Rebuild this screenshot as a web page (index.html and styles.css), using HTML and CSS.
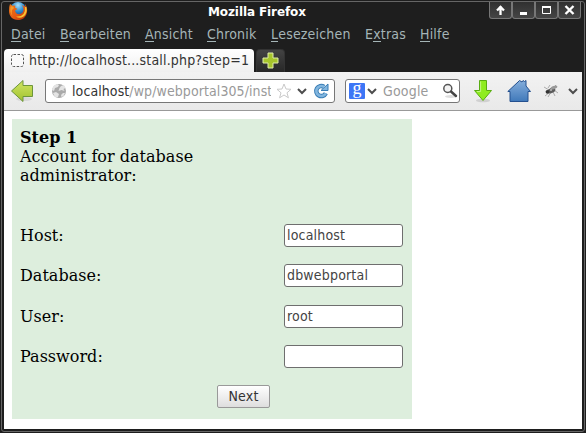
FILE: index.html
```html
<!DOCTYPE html>
<html lang="de">
<head>
<meta charset="utf-8">
<title>Mozilla Firefox</title>
<link rel="stylesheet" href="styles.css">
</head>
<body>
<div class="window">
  <header class="titlebar">
    <svg class="logo" width="20" height="20" viewBox="0 0 20 20">
      <defs>
        <radialGradient id="globe" cx=".5" cy=".2" r=".8"><stop offset="0" stop-color="#a9e0f8"/><stop offset=".45" stop-color="#3292d4"/><stop offset="1" stop-color="#10296c"/></radialGradient>
        <linearGradient id="fox" x1="0" y1="0" x2="1" y2="1"><stop offset="0" stop-color="#e8791c"/><stop offset=".55" stop-color="#e75a12"/><stop offset="1" stop-color="#a82a08"/></linearGradient>
      </defs>
      <circle cx="10" cy="9" r="8" fill="url(#globe)"/>
      <path d="M2 3 4.500 4.800Q6 4 7.500 4.800L7 6.500 9.500 8 7 9.500Q7.500 13 11 13.200C14.500 13 16 10 15.500 7L14 4 17.500 6 17 3C19 5.500 19.500 8 19 11.500 18 16.500 14.500 19 10 19 4.500 19 1 15 1 10Q0.800 6 2 3Z" fill="url(#fox)"/>
      <path d="M18.300 6Q20 12 15.500 15.500 11.500 18 8 15.500 13 16 15.500 13 17.500 10 17 6Z" fill="#fbc331"/>
      <path d="M2.500 6Q3 4.800 5 5.500L6 7 4 9Q3 12 4.500 15 1.500 11 2.500 6Z" fill="#f99b27"/>
    </svg>
    <h1 class="title">Mozilla Firefox</h1>
    <div class="controls">
      <span class="control"><svg width="21" height="16"><path d="M10.500 4v9M7 8.500 10.500 5 14 8.500" fill="none" stroke="#fff" stroke-width="2.300"/></svg></span>
      <span class="control"><svg width="21" height="16"><path d="M7 10h7v3H7z" fill="#fff"/></svg></span>
      <span class="control"><svg width="21" height="16"><path d="M6.500 4.500h8v7h-8z" fill="none" stroke="#fff"/><path d="M6 4h9v2H6z" fill="#fff"/></svg></span>
      <span class="control"><svg width="21" height="16"><path d="m6.500 4 8 8m0-8-8 8" fill="none" stroke="#fff" stroke-width="2.400"/></svg></span>
    </div>
  </header>
  <nav class="menubar">
    <span class="menu m1"><u>D</u>atei</span><span class="menu m2"><u>B</u>earbeiten</span><span class="menu m3"><u>A</u>nsicht</span><span class="menu m4"><u>C</u>hronik</span><span class="menu m5"><u>L</u>esezeichen</span><span class="menu m6">E<u>x</u>tras</span><span class="menu m7"><u>H</u>ilfe</span>
  </nav>
  <div class="tabs">
    <div class="tab">
      <svg width="15" height="15"><rect x="1.500" y="1.500" width="12" height="12" rx="2" fill="#fafafa" stroke="#555" stroke-dasharray="2.500 1.500"/></svg>
      <span class="tab-label">http://localhost...stall.php?step=1</span>
    </div>
    <div class="new-tab"><svg width="17" height="17"><path d="M6 1h5v5h5v5h-5v5H6v-5H1V6h5z" fill="#a7c52c" stroke="#e1edaa"/></svg></div>
  </div>
  <div class="toolbar">
    <svg class="back" width="24" height="24">
      <defs><linearGradient id="back" x2="0" y2="1"><stop stop-color="#d0e564"/><stop offset="1" stop-color="#a1c22e"/></linearGradient></defs>
      <ellipse cx="14" cy="20" rx="8" ry="2" fill="#d8d8d8"/>
      <path d="M1.500 12 13 1.500v5h9.500v11H13v5Z" fill="url(#back)" stroke="#6c953b" stroke-linejoin="round"/>
    </svg>
    <div class="address">
      <svg class="globe" width="16" height="16"><circle cx="8" cy="8" r="7" fill="#aaa"/><path d="M3 2.500 6 1l2 1-1 2-3 1-1 3-2-1Q1.500 4 3 2.500ZM10 3l3-1 1.500 3-2 1 1 2-3-1-3 1 1-3ZM2 10l3-1 3 2-1 3-2 .500Q3 13 2 10Zm8 2 2-2 2 0-1.500 3-2 1Z" fill="#e4e4e4"/></svg>
      <span class="url"><span class="host">localhost</span>/wp/webportal305/inst</span>
      <svg class="star" width="16" height="16"><path d="m8 1 2 5 5 .300-4 3.500 1.400 5L8 12l-4.400 2.800 1.400-5-4-3.500L6 6Z" fill="#fff" stroke="#c9c9c9"/></svg>
      <svg class="chev" width="10" height="8"><path d="M1 2l4 4 4-4" fill="none" stroke="#4d4d4d" stroke-width="2"/></svg>
      <svg class="reload" width="16" height="16"><path d="M12.800 10.200A5 5 0 1 1 11 3.800" fill="none" stroke="#397db5" stroke-width="4.500"/><path d="M15 1v6.500H8Z" fill="#82b6df" stroke="#397db5"/><path d="M12.800 10.200A5 5 0 1 1 11 3.800" fill="none" stroke="#82b6df" stroke-width="2.600"/></svg>
    </div>
    <div class="search">
      <span class="engine">g</span>
      <svg class="chev" width="10" height="8"><path d="M1 2l4 4 4-4" fill="none" stroke="#4d4d4d" stroke-width="2"/></svg>
      <span class="search-label">Google</span>
      <svg class="lens" width="16" height="16"><ellipse cx="9" cy="13.500" rx="6" ry="1.500" fill="#ddd"/><circle cx="5.800" cy="5.500" r="4" fill="#f3f3f3" stroke="#555" stroke-width="1.500"/><path d="m9 8.500 5 4.500" stroke="#444" stroke-width="2.400" stroke-linecap="round"/></svg>
    </div>
    <svg class="download" width="20" height="24"><ellipse cx="10" cy="21.500" rx="7" ry="1.800" fill="#d0d0d0"/><path d="M6.500 1.500h7v10H18.500L10 21.500 1.500 11.500h5z" fill="#8fec20" stroke="#59ad12" stroke-linejoin="round"/><path d="M7.600 2.500v10H4" fill="none" stroke="#c2f784"/></svg>
    <svg class="home" width="24" height="24">
      <defs><linearGradient id="home" x2="0" y2="1"><stop stop-color="#85aedb"/><stop offset="1" stop-color="#4079ba"/></linearGradient></defs>
      <path d="M.800 12.500 11 3 12.500 1.500 15 3l1-1.500 1.500 1L19 1.500V7l4.500 5.500H21v10H3v-10Z" fill="url(#home)" stroke="#24508f"/>
    </svg>
    <svg class="fly" width="16" height="14"><path d="m1 3 5 3m-4 6 5-4m-2 5 3-5m2 0 2 4m-1-6 4 3m-5-5 3-3M5 4 7 1" stroke="#999" stroke-width=".8"/><ellipse cx="8.500" cy="6.500" rx="4" ry="2.600" transform="rotate(-25 8.500 6.500)" fill="#5c5c5c"/><ellipse cx="11" cy="3.500" rx="3.500" ry="1.600" transform="rotate(-20 11 3.500)" fill="#999"/><circle cx="4.500" cy="7.800" r="1.900" fill="#333"/><circle cx="8" cy="6" r="1" fill="#bbb"/></svg>
    <svg class="chev more" width="10" height="8"><path d="M1 2l4 4 4-4" fill="none" stroke="#4d4d4d" stroke-width="2"/></svg>
  </div>
  <main class="page">
    <form class="step">
      <p class="intro"><b>Step 1</b><br>Account for database<br>administrator:</p>
      <label class="row"><span>Host:</span><input class="field" type="text" value="localhost"></label>
      <label class="row"><span>Database:</span><input class="field" type="text" value="dbwebportal"></label>
      <label class="row late"><span>User:</span><input class="field" type="text" value="root"></label>
      <label class="row"><span>Password:</span><input class="field" type="password"></label>
      <button class="next" type="button">Next</button>
    </form>
  </main>
</div>
</body>
</html>
```
FILE: styles.css
```css
* { box-sizing: border-box; }
body {
  margin: 0;
  background: #1e1e1e;
  font: 14px "DejaVu Sans Condensed", "DejaVu Sans", sans-serif;
  font-stretch: condensed;
  letter-spacing: .18px;
}
svg { display: block; flex: none; }
.window {
  width: 584px;
  height: 431px;
  margin: 1px;
  padding: 0 2px 1px;
  border: 1px solid #666;
  border-radius: 3px;
  background: #1e1e1e;
}
.titlebar {
  display: grid;
  grid-template-columns: 100px 1fr 100px;
  height: 20px;
}
.logo { margin: -1px 0 0 4px; }
.title {
  margin: 1px 0 0;
  font: bold 12px/18px "DejaVu Sans", sans-serif;
  letter-spacing: -.1px;
  color: #fff;
  text-indent: 104px;
  white-space: nowrap;
}
.controls { display: flex; justify-content: flex-end; margin-right: 1px; }
.control {
  width: 23px;
  height: 17px;
  border: 1px solid #777;
  border-top: 0;
  border-radius: 0 0 3px 3px;
  background: linear-gradient(#303030, #454545);
}
.menubar {
  display: flex;
  height: 27px;
  padding-left: 7px;
  line-height: 25px;
  color: #a5b5b7;
}
.menu { white-space: nowrap; }
.menu u {
  display: inline-block;
  border-bottom: 1px solid #a5b5b7;
  line-height: 13px;
  text-decoration: none;
}
.m1 { width: 49px; }
.m2 { width: 85px; }
.m3 { width: 62px; }
.m4 { width: 64px; }
.m5 { width: 94px; }
.m6 { width: 55px; }
.tabs { display: flex; gap: 2px; height: 23px; }
.tab {
  display: flex;
  align-items: center;
  gap: 4px;
  width: 250px;
  padding-left: 6px;
  border-radius: 4px 4px 0 0;
  background: linear-gradient(#fff, #f0f0f0);
  color: #333;
}
.tab-label { white-space: nowrap; margin-top: -2px; }
.new-tab {
  width: 29px;
  padding: 2px 0 0 5px;
  border: 1px solid #333;
  border-bottom: 0;
  border-radius: 4px 4px 0 0;
  background: linear-gradient(#434343, #272727);
}
.toolbar {
  display: flex;
  align-items: center;
  height: 39px;
  padding-left: 6px;
  border-bottom: 1px solid #999;
  background: linear-gradient(#f2f2f2, #e9e9e9);
}
.address, .search {
  display: flex;
  align-items: center;
  height: 24px;
  border: 1px solid #777;
  border-radius: 3px;
  background: #fff;
}
.address { width: 290px; margin-left: 11px; padding-left: 5px; }
.url {
  width: 199px;
  margin-left: 5px;
  overflow: hidden;
  white-space: nowrap;
  letter-spacing: .09px;
  color: #999;
}
.host { color: #333; }
.star { margin-left: 5px; }
.address .chev { margin-left: 5px; }
.reload { margin-left: 6px; }
.search { width: 115px; margin-left: 10px; padding-left: 3px; }
.engine {
  width: 16px;
  height: 16px;
  border-radius: 1px;
  background: #3d76f6;
  color: #fff;
  font: 18px/11px "Liberation Serif", serif;
  text-align: center;
}
.search .chev { margin-left: 2px; }
.search-label { margin-left: 6px; color: #999; }
.lens { margin-left: auto; margin-right: 1px; }
.download { margin-left: 13px; }
.home { margin-left: 14px; }
.fly { margin-left: 12px; }
.more { margin-left: 9px; }
.page {
  height: 318px;
  padding: 8px;
  background: #fff;
}
.step {
  width: 400px;
  height: 300px;
  padding: 9px 9px 0 8px;
  background: #ddeedd;
  font: 16px/19px "DejaVu Serif", serif;
  letter-spacing: .02px;
  color: #000;
}
.intro { height: 96px; margin: 0; }
.row {
  display: flex;
  align-items: center;
  justify-content: space-between;
  height: 23px;
  margin-bottom: 17px;
}
.late { margin-top: 18px; }
.field {
  width: 119px;
  height: 23px;
  padding: 0 2px 2px;
  border: 1px solid #6e6e6e;
  border-radius: 3px;
  background: #fff;
  color: #444;
  font: 14px "DejaVu Sans Condensed", "DejaVu Sans", sans-serif;
  font-stretch: condensed;
  letter-spacing: .18px;
}
.next {
  display: block;
  width: 53px;
  height: 23px;
  margin-left: 197px;
  padding: 0 0 2px;
  border: 1px solid #999;
  border-radius: 2px;
  background: linear-gradient(#fff, #dedede);
  color: #333;
  font: 14px "DejaVu Sans Condensed", "DejaVu Sans", sans-serif;
  font-stretch: condensed;
  letter-spacing: .18px;
}
```
